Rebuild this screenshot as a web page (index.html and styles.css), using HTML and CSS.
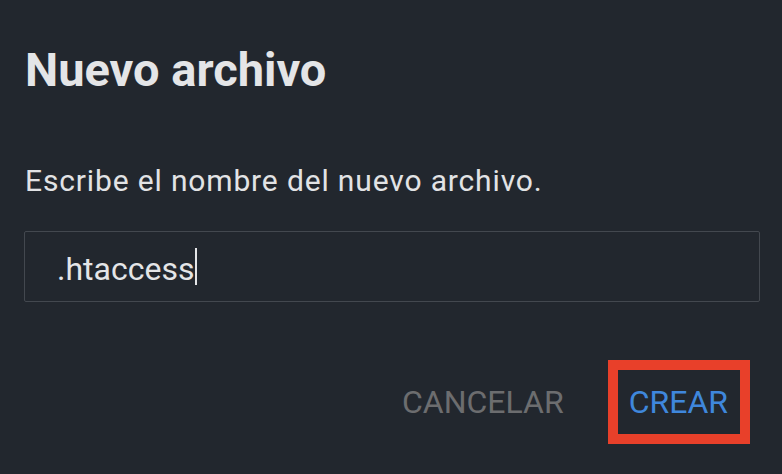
FILE: index.html
```html
<!DOCTYPE html>
<html lang="es">
<head>
<meta charset="utf-8">
<title>Nuevo archivo</title>
<link rel="stylesheet" href="styles.css">
</head>
<body>
<div class="dialog">
  <h1 class="title">Nuevo archivo</h1>
  <p class="prompt">Escribe el nombre del nuevo archivo.</p>
  <div class="field"><span class="value">.htaccess</span><span class="caret"></span></div>
  <div class="actions">
    <button class="btn btn-cancel">CANCELAR</button>
    <button class="btn btn-create">CREAR</button>
  </div>
</div>
</body>
</html>
```
FILE: styles.css
```css
html, body {
  margin: 0;
  padding: 0;
  background: #22272e;
  height: 100%;
}
.dialog {
  font-family: Roboto, "Liberation Sans", sans-serif;
  padding: 42px 22px 0 24px;
  display: flex;
  flex-direction: column;
}
.title {
  margin: 0 0 0 1px;
  font-size: 47px;
  line-height: 56px;
  font-weight: 700;
  color: #e4e5e7;
}
.prompt {
  margin: 65px 0 0 1px;
  font-size: 30px;
  line-height: 35px;
  letter-spacing: 0.85px;
  color: #e2e3e5;
}
.field {
  margin-top: 33px;
  height: 69px;
  border: 1px solid #43484f;
  border-radius: 2px;
  display: flex;
  align-items: center;
  padding-left: 32px;
  font-size: 32px;
  color: #e4e5e7;
}
.value {
  padding-top: 4px;
}
.caret {
  width: 2px;
  height: 37px;
  background: #e4e5e7;
  margin-left: 1px;
}
.actions {
  display: flex;
  justify-content: flex-end;
  align-items: center;
  gap: 44px;
  margin-top: 58px;
  padding-right: 10px;
}
.btn {
  font-family: Roboto, "Liberation Sans", sans-serif;
  font-size: 32px;
  line-height: 38px;
  background: none;
  border: none;
  padding: 0;
  margin: 0;
}
.btn-cancel {
  color: #6c6d6f;
}
.btn-create {
  color: #3f87dc;
  border: 10px solid #e8402a;
  padding: 13px 12px 13px 11px;
}
```
